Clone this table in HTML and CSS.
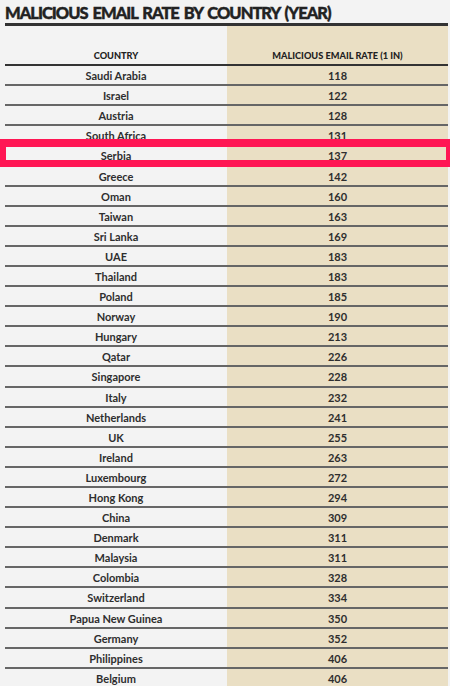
FILE: index.html
```html
<!DOCTYPE html>
<html>
<head>
<meta charset="utf-8">
<link rel="stylesheet" href="styles.css">
</head>
<body>
<div class="page">
  <h1 class="title">MALICIOUS EMAIL RATE BY COUNTRY (YEAR)</h1>
  <div class="table">
    <div class="cell head">COUNTRY</div><div class="cell head alt">MALICIOUS EMAIL RATE (1 IN)</div>
    <div class="cell">Saudi Arabia</div><div class="cell alt">118</div>
    <div class="cell">Israel</div><div class="cell alt">122</div>
    <div class="cell">Austria</div><div class="cell alt">128</div>
    <div class="cell">South Africa</div><div class="cell alt">131</div>
    <div class="cell">Serbia</div><div class="cell alt">137</div>
    <div class="cell">Greece</div><div class="cell alt">142</div>
    <div class="cell">Oman</div><div class="cell alt">160</div>
    <div class="cell">Taiwan</div><div class="cell alt">163</div>
    <div class="cell">Sri Lanka</div><div class="cell alt">169</div>
    <div class="cell">UAE</div><div class="cell alt">183</div>
    <div class="cell">Thailand</div><div class="cell alt">183</div>
    <div class="cell">Poland</div><div class="cell alt">185</div>
    <div class="cell">Norway</div><div class="cell alt">190</div>
    <div class="cell">Hungary</div><div class="cell alt">213</div>
    <div class="cell">Qatar</div><div class="cell alt">226</div>
    <div class="cell">Singapore</div><div class="cell alt">228</div>
    <div class="cell">Italy</div><div class="cell alt">232</div>
    <div class="cell">Netherlands</div><div class="cell alt">241</div>
    <div class="cell">UK</div><div class="cell alt">255</div>
    <div class="cell">Ireland</div><div class="cell alt">263</div>
    <div class="cell">Luxembourg</div><div class="cell alt">272</div>
    <div class="cell">Hong Kong</div><div class="cell alt">294</div>
    <div class="cell">China</div><div class="cell alt">309</div>
    <div class="cell">Denmark</div><div class="cell alt">311</div>
    <div class="cell">Malaysia</div><div class="cell alt">311</div>
    <div class="cell">Colombia</div><div class="cell alt">328</div>
    <div class="cell">Switzerland</div><div class="cell alt">334</div>
    <div class="cell">Papua New Guinea</div><div class="cell alt">350</div>
    <div class="cell">Germany</div><div class="cell alt">352</div>
    <div class="cell">Philippines</div><div class="cell alt">406</div>
    <div class="cell">Belgium</div><div class="cell alt">406</div>
  </div>
  <div class="highlight"></div>
</div>
</body>
</html>
```

FILE: styles.css
```css
html, body {
  margin: 0;
  padding: 0;
  background: #f3f3f3;
}
.page {
  position: relative;
  padding-left: 5px;
  width: 443px;
  font-family: Lato, "Open Sans", sans-serif;
  color: #2e2e2e;
}
.title {
  margin: 0;
  height: 23px;
  font-size: 16.5px;
  line-height: 27px;
  font-weight: 900;
  color: #222;
  letter-spacing: -1px;
  word-spacing: 2px;
  -webkit-text-stroke: 0.4px #222;
  white-space: nowrap;
}
.table {
  display: grid;
  grid-template-columns: 222px 221px;
  border-top: 3px solid #333;
}
.cell {
  height: 20.1px;
  box-sizing: border-box;
  border-bottom: 2px solid #666;
  display: flex;
  align-items: center;
  justify-content: center;
  font-size: 11px;
  font-weight: 700;
  padding-top: 1px;
}
.cell.alt {
  background: #eadfc4;
}
.cell.head {
  height: 40px;
  align-items: flex-end;
  padding-bottom: 3px;
  font-size: 9.2px;
  font-weight: 900;
  border-bottom: 2px solid #333;
  color: #222;
}
.highlight {
  position: absolute;
  left: 0;
  top: 139px;
  width: 450px;
  height: 28px;
  box-sizing: border-box;
  border-style: solid;
  border-color: #ff1654;
  border-width: 8px 4px 7px 6px;
}
```
